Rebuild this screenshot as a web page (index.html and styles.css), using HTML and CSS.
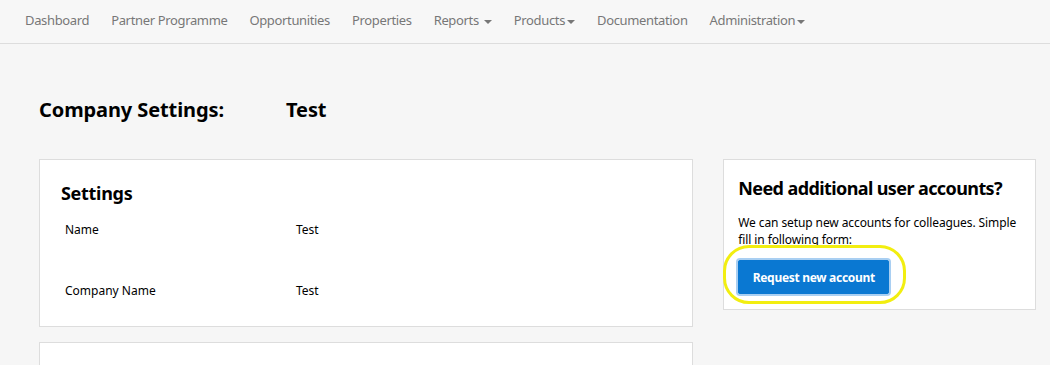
FILE: index.html
```html
<!DOCTYPE html>
<html lang="en">
<head>
  <meta charset="UTF-8" />
  <title>Company Settings</title>
  <link rel="stylesheet" href="styles.css">
</head>
<body>
  <!-- top navigation -->
  <nav class="navbar">
    <a href="#">Dashboard</a>
    <a href="#">Partner Programme</a>
    <a href="#">Opportunities</a>
    <a href="#">Properties</a>
    <a href="#">Reports <span class="caret"></span></a>
    <a href="#">Products<span class="caret"></span></a>
    <a href="#">Documentation</a>
    <a href="#">Administration<span class="caret"></span></a>
  </nav>

  <main class="page">
    <h1 class="page-title"><span class="title-label">Company Settings:</span><span>Test</span></h1>

    <div class="layout">
      <div class="main-col">
        <section class="card settings-card">
          <h2>Settings</h2>
          <dl class="fields">
            <dt>Name</dt><dd>Test</dd>
            <dt>Company Name</dt><dd>Test</dd>
          </dl>
        </section>
        <section class="card next-card"></section>
      </div>

      <aside class="card side-card">
        <h2>Need additional user accounts?</h2>
        <p>We can setup new accounts for colleagues. Simple fill in following form:</p>
        <div class="btn-wrap">
          <button class="btn-primary">Request new account</button>
          <span class="highlight"></span>
        </div>
      </aside>
    </div>
  </main>
</body>
</html>
```

FILE: styles.css
```css
:root {
  --bg: #f6f6f6;
  --border: #dddddd;
  --nav-text: #777;
  --blue: #0a78d2;
}
* { box-sizing: border-box; }
body {
  margin: 0;
  background: var(--bg);
  font-family: "Noto Sans", "Open Sans", sans-serif;
  color: #000;
}

/* Navbar */
.navbar {
  display: flex;
  align-items: center;
  height: 44px;
  padding: 0 3px 3px 14px;
  border-bottom: 1px solid var(--border);
  background: #f7f7f7;
}
.navbar a {
  padding: 0 11px;
  font-size: 13px;
  color: var(--nav-text);
  text-decoration: none;
  letter-spacing: -0.35px;
}
.caret {
  display: inline-block;
  width: 0; height: 0;
  margin-left: 2px;
  vertical-align: middle;
  border-top: 4px solid #777;
  border-left: 4px solid transparent;
  border-right: 4px solid transparent;
}

/* Page */
.page { padding: 52px 14px 0 39px; }
.page-title {
  display: flex;
  margin: 0 0 35px;
  font-size: 20px;
  font-weight: 700;
  letter-spacing: -0.1px;
  line-height: 28px;
}
.title-label { width: 247px; }

.layout {
  display: flex;
  align-items: flex-start;
  gap: 30px;
}
.main-col { width: 655px; }
.card {
  background: #fff;
  border: 1px solid var(--border);
}
.card h2 {
  margin: 0;
  font-size: 18px;
  font-weight: 700;
  letter-spacing: -0.3px;
}

.settings-card { padding: 21px 21px 26px; height: 168px; }
.fields {
  display: grid;
  grid-template-columns: 231px 1fr;
  row-gap: 44px;
  margin: 16px 0 0 4px;
  font-size: 12px;
  line-height: 17px;
}
.fields dt, .fields dd { margin: 0; }
.next-card { height: 40px; margin-top: 15px; }

.side-card {
  width: 313px;
  height: 151px;
  padding: 16px 14px 0;
}
.side-card h2 { letter-spacing: -0.6px; }
.side-card p {
  margin: 14px 0 0;
  font-size: 12px;
  line-height: 17px;
  letter-spacing: -0.1px;
}
.btn-wrap {
  position: relative;
  width: 151px;
  margin-top: 12px;
}
.btn-primary {
  display: block;
  width: 151px;
  height: 34px;
  padding: 0;
  font-family: inherit;
  font-size: 12px;
  font-weight: 700;
  letter-spacing: -0.3px;
  color: #fff;
  background: var(--blue);
  border: 1px solid var(--blue);
  border-radius: 2px;
  box-shadow: 0 0 0 2px #a9cff2;
}
/* yellow marker ring drawn over the button */
.highlight {
  position: absolute;
  left: -15px; right: -17px;
  top: -15px; bottom: -10px;
  border: 3px solid #f2ee10;
  border-radius: 26px;
  pointer-events: none;
}
```
